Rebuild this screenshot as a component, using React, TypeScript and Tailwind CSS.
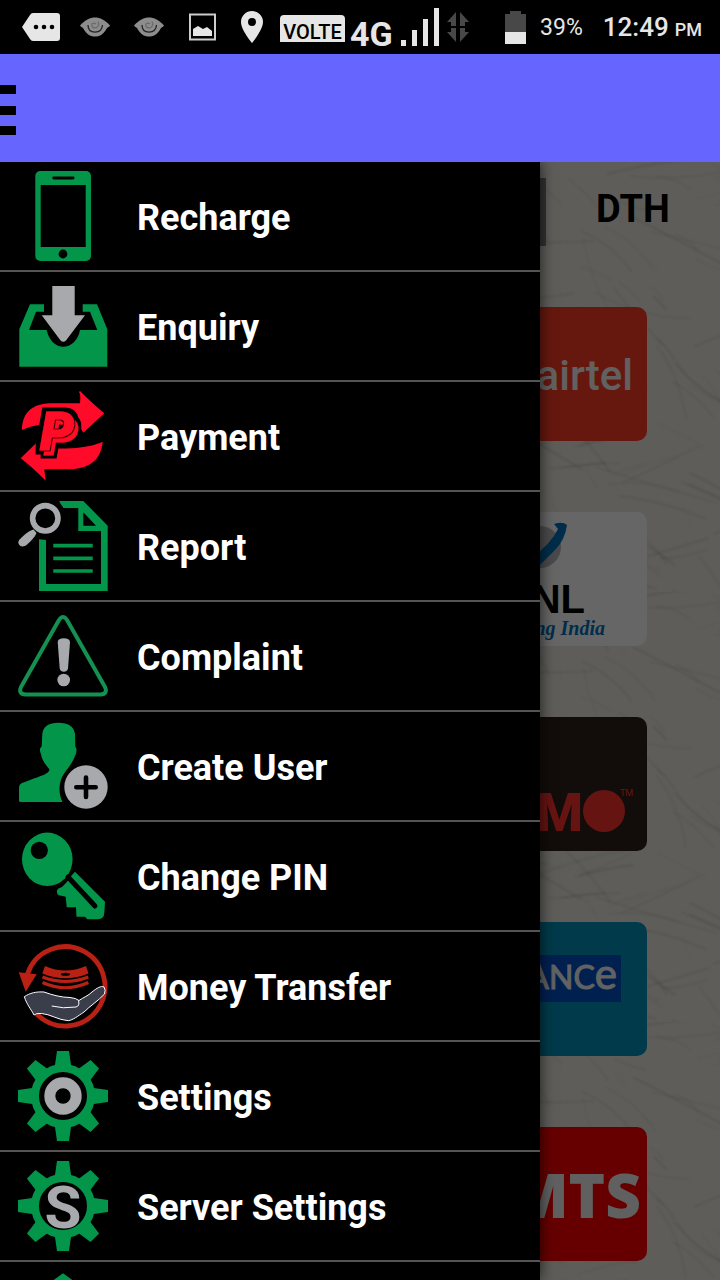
import type { ReactNode } from 'react';

const GREEN = '#03964a';
const GREY = '#a7a9ac';

interface MenuItem { label: string; icon: ReactNode }

/* ── Menu icons (all on a 90x90 grid) ────────────────────────────── */
function Icon({ children }: { children: ReactNode }) {
  return (
    <svg viewBox="0 0 90 90" className="size-[90px] flex-shrink-0" aria-hidden="true">
      {children}
    </svg>
  );
}

function PhoneIcon() {
  return (
    <Icon>
      <rect x="17.3" y="0" width="55.7" height="90" rx="5" fill={GREEN} />
      <rect x="22.7" y="14" width="45" height="62" />
      <rect x="34.3" y="5.6" width="22.2" height="2.8" rx="1.4" />
      <circle cx="45" cy="83" r="4.4" />
    </Icon>
  );
}

function InboxIcon() {
  return (
    <Icon>
      <path
        fill={GREEN}
        d="M12 23.3H26V30.7H18L11 49H28.7C31 60 38 65.7 45.3 65.7S60 60 62 49H79.3L72 30.7H64.7V23.3H79L89.3 48.3V85.7H1.3V48.3Z"
      />
      <path fill={GREY} d="M34.3 5H56.7V34.3H67L48 59.5Q45.3 62 42.6 59.5L23.7 34.3H34.3Z" />
    </Icon>
  );
}

function PaymentIcon() {
  return (
    <Icon>
      <defs>
        {/* thin outline, offset copy, then a thick outline behind both */}
        <filter id="coin-letter" x="-30%" y="-30%" width="170%" height="170%">
          <feOffset in="SourceGraphic" dx="4" dy="5" result="back" />
          <feMorphology in="SourceAlpha" operator="dilate" radius="1" result="thin" />
          <feMerge result="pair">
            <feMergeNode in="back" />
            <feMergeNode in="thin" />
            <feMergeNode in="SourceGraphic" />
          </feMerge>
          <feMorphology in="pair" operator="dilate" radius="3" result="grown" />
          <feColorMatrix in="grown" values="0 0 0 0 0  0 0 0 0 0  0 0 0 0 0  0 0 0 1 0" result="thick" />
          <feMerge>
            <feMergeNode in="thick" />
            <feMergeNode in="pair" />
          </feMerge>
        </filter>
      </defs>
      <g fill="#ff0a28">
        <path d="M4 39C4 24 12 13 32 12.3H62Q63 4 61 1L62 0Q76 14 86.3 22.3L65.3 41.7L60 33H27C18 34 10 36 4 39Z" />
        <path d="M2.7 67.3L20.3 50L23 57.5H48C62 57 76 55 84.7 50.7C83 67 74 78 50 78.3H26.3L27.7 89.7Q14 76 2.7 67.3Z" />
      </g>
      <text
        x="22"
        y="59"
        fontFamily="Roboto, sans-serif"
        fontWeight="900"
        fontStyle="italic"
        fontSize="54"
        fill="#ff0a28"
        stroke="#ff0a28"
        strokeWidth="1"
        filter="url(#coin-letter)"
      >
        P
      </text>
    </Icon>
  );
}

function ReportIcon() {
  return (
    <Icon>
      <path
        fill={GREEN}
        fillRule="evenodd"
        d="M41.3 0H65.3L89.7 24.7V90H21V38.3L28 39V83H83V30H60.3V7H45.3C44 4 42 3 41.3 0ZM65.3 11.3V24.7H78Z"
      />
      <path stroke={GREEN} strokeWidth="3.7" d="M35.3 44.7H74.7M35.3 57.3H74.7M35.3 70H74.7" />
      <circle cx="27.3" cy="17.3" r="12.7" fill="none" stroke={GREY} strokeWidth="5.6" />
      <path fill={GREY} d="M15.5 28.5L18.5 32C17 36 12 41 8.5 44C3 48 -2 42.5 1.5 38.5C5 35 10 30 15.5 28.5Z" />
    </Icon>
  );
}

function WarningIcon() {
  return (
    <Icon>
      <path
        fill="none"
        stroke="#129150"
        strokeWidth="4"
        strokeLinejoin="round"
        d="M41 9Q45 3 49 9L87 76Q90 83 82.5 83.5H7.5Q0 83 3 76Z"
      />
      <path fill={GREY} d="M39.7 31Q40 27.3 45.8 27.3T52 31L50 57.5Q49 60.7 45.8 60.7T41.7 57.5Z" />
      <circle cx="45.7" cy="69" r="6.3" fill={GREY} />
    </Icon>
  );
}

function UserAddIcon() {
  return (
    <Icon>
      <path
        fill={GREEN}
        d="M40.3 1.7C31 1.7 25 5 24.3 13L23.6 25.7C21.5 27 21.5 30 23 33C24 40 28 44 31.5 48.5C31 53 24 54.5 4 62C1.5 63 1 65 1 68V79.7Q1 81 3 81H44.5C40 72 40.5 60 46.5 52C49 48 54 43 57 35C59 31 59 27 57.3 25.7L57 13C56 5 50 1.7 40.3 1.7Z"
      />
      <circle cx="68" cy="66" r="21.7" fill={GREY} />
      <path stroke="#000" strokeWidth="4.6" strokeLinecap="round" d="M58.3 66.3H77.7M68 56.6V76" />
    </Icon>
  );
}

function KeyIcon() {
  return (
    <Icon>
      <ellipse cx="29.3" cy="28.3" rx="25.3" ry="26.7" fill={GREEN} />
      <circle cx="21.3" cy="19.3" r="8.6" />
      <path
        fill={GREEN}
        d="M48.7 51.3L54 44L57 40.7L87 70.7L86.3 82Q86 88 80 88.3H69.3L67 85.7H58.5L58 76.3H48.7L47.7 65.7L40 64Q37.5 60 40.5 57.5L44 56Z"
      />
      <path stroke="#000" strokeWidth="5" strokeLinecap="round" d="M50 46L77 75" />
    </Icon>
  );
}

function MoneyIcon() {
  return (
    <Icon>
      <path fill="none" stroke="#b92114" strokeWidth="4.8" d="M9.5 33A39.7 39.7 0 1 1 18.7 73" />
      <path fill="#b92114" d="M0.7 31.3L18.7 33.3L7.7 50.7Z" />
      <path fill="#b92114" d="M27 25Q47.3 34 68 25L70.5 32.5Q47.3 42 24.3 32.5Z" />
      <ellipse cx="47.5" cy="33.3" rx="4.6" ry="1.5" />
      <path fill="none" stroke="#b92114" strokeWidth="3.2" d="M24.5 36Q47.3 45 70.3 36M24.5 41.5Q47.3 52 70.3 41.5" />
      <path
        fill="#3a3d4a"
        stroke="#fff"
        strokeWidth="1"
        strokeLinejoin="round"
        d="M6.3 55.7C12 52 18 50.5 26 51C34 54 44 56.5 52 56.5Q58 57 61 59.5C66 56 70 55 74 51C79 47 83 44.5 86 46Q88 49 86.5 53C80 60 72 65 66 71C60 75 55 79 50.3 79.7C40 79 32 73 23.7 72.5Q18 72 16 74C13 68 9 64 6.3 55.7Z"
      />
      <path fill="none" stroke="#fff" strokeWidth="1" d="M60.5 59.5Q62 65 58 66Q45 68 33.7 65" />
    </Icon>
  );
}

function Gear({ children }: { children: ReactNode }) {
  return (
    <Icon>
      {[0, 45, 90, 135, 180, 225, 270, 315].map((deg) => (
        <path key={deg} fill={GREEN} transform={`rotate(${deg} 45 45)`} d="M39 0H51L53.3 16H36.7Z" />
      ))}
      <circle cx="45" cy="45" r="28" fill="none" stroke={GREEN} strokeWidth="8" />
      {children}
    </Icon>
  );
}

function HomeIcon() {
  return (
    <Icon>
      <path fill={GREEN} d="M45 2.3L89 34V88H1V34Z" />
    </Icon>
  );
}

const menu: MenuItem[] = [
  { label: 'Recharge', icon: <PhoneIcon /> },
  { label: 'Enquiry', icon: <InboxIcon /> },
  { label: 'Payment', icon: <PaymentIcon /> },
  { label: 'Report', icon: <ReportIcon /> },
  { label: 'Complaint', icon: <WarningIcon /> },
  { label: 'Create User', icon: <UserAddIcon /> },
  { label: 'Change PIN', icon: <KeyIcon /> },
  { label: 'Money Transfer', icon: <MoneyIcon /> },
  {
    label: 'Settings',
    icon: <Gear><circle cx="45" cy="45" r="13.2" fill="none" stroke={GREY} strokeWidth="11" /></Gear>,
  },
  {
    label: 'Server Settings',
    icon: (
      <Gear>
        <text x="45" y="67" textAnchor="middle" fontFamily="Roboto, sans-serif" fontWeight="700" fontSize="60" fill={GREY}>S</text>
      </Gear>
    ),
  },
  { label: '', icon: <HomeIcon /> },
];

/* ── Status bar ──────────────────────────────────────────────────── */
function EyeIcon() {
  return (
    <svg viewBox="0 0 30 20" className="ml-6 h-5 w-[30px]" aria-hidden="true">
      <path fill="#8d8d8d" d="M0 8.5C5 3 10 0.5 15 0.5S25 3 30 8.5C29 10 28 10 27 11C24 17 20 19.5 15 19.5S6 17 3 11C2 10 1 10 0 8.5Z" />
      <path fill="none" stroke="#222" strokeWidth="1.3" d="M8 8Q8 15 15 15.2Q22 15 22.5 8" />
      <path fill="none" stroke="#6a6a6a" strokeWidth="1.2" d="M18 4.5Q20 9 16 11Q11 11 12 7Q14 5 16 7" />
    </svg>
  );
}

function StatusBar() {
  return (
    <div className="flex h-[54px] flex-shrink-0 items-center bg-black pr-[18px] pl-[22px] text-[#e6e6e6]">
      <svg viewBox="0 0 38 28" className="h-7 w-[38px]" aria-hidden="true">
        <path fill="#e6e6e6" d="M11 0H35Q38 0 38 3V25Q38 28 35 28H11Q9 28 8 26L0 14L8 2Q9 0 11 0Z" />
        <circle cx="14" cy="14" r="2.3" />
        <circle cx="22" cy="14" r="2.3" />
        <circle cx="30" cy="14" r="2.3" />
      </svg>
      <div className="-ml-1 flex">
        <EyeIcon />
        <EyeIcon />
      </div>
      <svg viewBox="0 0 28 28" className="ml-6 size-7" aria-hidden="true">
        <rect x="2" y="1.5" width="25" height="25" fill="none" stroke="#ccc" strokeWidth="2" />
        <path fill="#e6e6e6" d="M5 23V16L10 13L15 16L19 14L24 18V23Z" />
      </svg>
      <svg viewBox="0 0 24 32" className="ml-6 h-8 w-6" aria-hidden="true">
        <path fill="#e6e6e6" fillRule="evenodd" d="M12 0A11 11 0 0 1 23 11C23 19 12 32 12 32S1 19 1 11A11 11 0 0 1 12 0ZM12 7A4 4 0 1 0 12 15A4 4 0 1 0 12 7Z" />
      </svg>
      <svg viewBox="0 0 65 54" className="ml-4 h-[54px] w-[65px]" aria-label="VoLTE">
        <path fill="#e6e6e6" d="M4 15H61Q65 15 65 19V42H0V19Q0 15 4 15Z" />
        <text x="32.5" y="39" textAnchor="middle" fontFamily="Roboto, sans-serif" fontWeight="500" fontSize="20">VOLTE</text>
      </svg>
      <svg viewBox="0 0 90 54" className="ml-1 h-[54px] w-[90px]" aria-label="4G signal">
        <text x="1" y="46" fontFamily="Roboto, sans-serif" fontWeight="700" fontSize="34" fill="#e6e6e6">4G</text>
        <path fill="#e6e6e6" d="M52 40H57V46H52ZM63 30H68V46H63ZM74 19H79V46H74ZM85 8H90V46H85Z" />
      </svg>
      <svg viewBox="0 0 22 30" className="ml-2 h-[30px] w-[22px]" aria-hidden="true">
        <path
          fill="#484848"
          d="M9 0V14H4V10H0ZM13 0L22 10H18V14H13ZM0 20H4V16H9V30ZM13 16H18V20H22L13 30Z"
        />
      </svg>
      <div className="ml-auto flex items-center font-['Roboto',sans-serif]">
        <svg viewBox="0 0 21 33" className="mr-3.5 h-[33px] w-[21px]" aria-hidden="true">
          <path fill="#484848" d="M5 0H16V3H21V33H0V3H5Z" />
          <rect y="21" width="21" height="12" fill="#e6e6e6" />
        </svg>
        <span className="pt-0.5 text-[23px] leading-8">39%</span>
        <p className="ml-5 flex items-baseline gap-1.5 pt-0.5 font-medium">
          <span className="text-[26px] leading-8">12:49</span>
          <span className="text-[18px] leading-8">PM</span>
        </p>
      </div>
    </div>
  );
}

/* ── Page behind the drawer ──────────────────────────────────────── */
// seeded, so that the fibres land in the same place on each render
function makeFibres(count: number) {
  let seed = 7;
  const rnd = () => {
    seed = (seed + 0x6d2b79f5) | 0;
    let t = Math.imul(seed ^ (seed >>> 15), 1 | seed);
    t = (t + Math.imul(t ^ (t >>> 7), 61 | t)) ^ t;
    return ((t ^ (t >>> 14)) >>> 0) / 4294967296;
  };
  return Array.from({ length: count }, () => {
    const angle = rnd() * 1.7 - 0.5;
    const length = 20 + rnd() * rnd() * 130;
    const dx = Math.round(Math.cos(angle) * length);
    const dy = Math.round(Math.sin(angle) * length);
    const bend = (rnd() - 0.5) * length * 0.25;
    return {
      d: `M${Math.round(rnd() * 380)} ${Math.round(rnd() * 430)}q${Math.round(dx / 2 + bend)} ${Math.round(dy / 2 - bend)} ${dx} ${dy}`,
      width: 1 + rnd() * 1.5,
      opacity: 0.08 + rnd() * 0.2,
    };
  });
}
const fibres = makeFibres(170);

function PaperTexture() {
  return (
    <svg className="absolute inset-0 size-full" aria-hidden="true">
      <defs>
        <filter id="soften">
          <feGaussianBlur stdDeviation="0.8" />
        </filter>
        <pattern id="paper" width="400" height="430" patternUnits="userSpaceOnUse">
          <g filter="url(#soften)" fill="none" stroke="#9a968a">
            {fibres.map((f, i) => (
              <path key={i} d={f.d} strokeWidth={f.width} opacity={f.opacity} />
            ))}
          </g>
        </pattern>
      </defs>
      <rect width="100%" height="100%" fill="url(#paper)" />
    </svg>
  );
}

function Tile({ name, className, children }: { name: string; className: string; children: ReactNode }) {
  return (
    <button aria-label={name} className={`h-[134px] w-[214px] overflow-hidden rounded-[10px] ${className}`}>
      <svg viewBox="0 0 214 134" className="size-full">{children}</svg>
    </button>
  );
}

function OperatorPage() {
  return (
    <main className="relative h-full overflow-hidden bg-[#ebe9e0]">
      <PaperTexture />
      <div className="relative">
        <div className="flex pt-4">
          <div className="h-[68px] flex-1 bg-[#808080]" />
          <button className="h-[68px] w-[174px] pb-1.5 font-['Roboto',sans-serif] text-[38px] font-bold text-black">DTH</button>
        </div>
        <div className="ml-[50%] flex flex-col items-center gap-[71px] pt-[61px]">
          <Tile name="Airtel" className="bg-[#ff3c25]">
            <text x="200" y="83" textAnchor="end" fontFamily="Roboto, sans-serif" fontWeight="500" fontSize="42" fill="#f5f0f0">airtel</text>
          </Tile>
          <Tile name="BSNL" className="bg-white">
            <circle cx="107" cy="35" r="21" fill="#b9b9bd" />
            <path fill="#0072bc" d="M121 12Q130 9 134 13Q132 28 122 38L104 56L98 46Q118 32 125 17Z" />
            <text x="152" y="101" textAnchor="end" fontFamily="Liberation Sans, sans-serif" fontWeight="700" fontSize="40">BSNL</text>
            <text x="172" y="123" textAnchor="end" fontFamily="Liberation Serif, serif" fontWeight="700" fontStyle="italic" fontSize="20" fill="#0072bc">Connecting India</text>
          </Tile>
          <Tile name="Docomo" className="bg-[#2d1e19]">
            <text x="150" y="114" textAnchor="end" fontFamily="Roboto, sans-serif" fontWeight="900" fontSize="54" fill="#ff342d">M</text>
            <circle cx="171" cy="94" r="21" fill="#ff342d" />
            <text x="187" y="79" fontFamily="Roboto, sans-serif" fontSize="9" fill="#ff342d">TM</text>
          </Tile>
          <Tile name="Reliance" className="bg-[#0091bb]">
            <rect y="33" width="188" height="47" fill="#0050c8" />
            <text x="184" y="67" textAnchor="end" fontFamily="Lato, sans-serif" fontSize="32" fill="#f5f5f5" stroke="#f5f5f5" strokeWidth="1">
              RELIANC<tspan fontSize="42">e</tspan>
            </text>
          </Tile>
          <Tile name="MTS" className="bg-[#ff0000]">
            <text x="208" y="91" textAnchor="end" fontFamily="Open Sans, sans-serif" fontWeight="800" fontSize="62" fill="#f0f0f0">MTS</text>
          </Tile>
        </div>
      </div>
    </main>
  );
}

export default function App() {
  return (
    <div className="flex h-screen flex-col overflow-hidden bg-black">
      <StatusBar />

      <header className="flex h-[108px] flex-shrink-0 items-center bg-[#6666ff]">
        <button aria-label="Close menu">
          <svg viewBox="0 0 16 54" className="h-[54px] w-4" aria-hidden="true">
            <path d="M0 4H16V13H0ZM0 25H16V34H0ZM0 45H16V54H0Z" />
          </svg>
        </button>
      </header>

      <div className="relative min-h-0 flex-1 overflow-hidden">
        <OperatorPage />
        <div className="absolute inset-0 bg-black/60" />

        {/* Drawer */}
        <nav className="absolute inset-y-0 left-0 w-3/4 overflow-hidden bg-black shadow-[0_0_14px_rgba(0,0,0,0.7)]">
          <ul>
            {menu.map((item) => (
              <li key={item.label} className="border-b-2 border-[#545454]">
                <a href="#" className="flex h-[108px] items-center gap-[29px] px-[18px] font-['Roboto',sans-serif] text-[36px] font-bold text-white">
                  {item.icon}
                  {item.label && <span className="pt-1">{item.label}</span>}
                </a>
              </li>
            ))}
          </ul>
        </nav>
      </div>
    </div>
  );
}
